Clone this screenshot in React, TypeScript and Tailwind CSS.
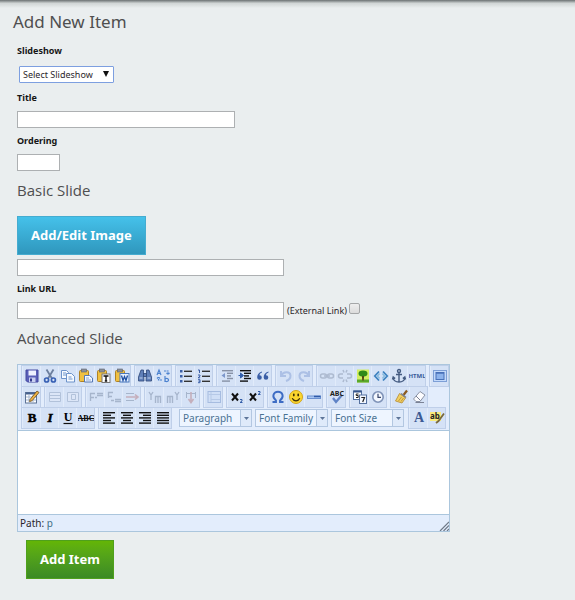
import React from 'react';

type Tool = { name: string; icon: React.ReactNode; off?: boolean };

const lines = (rows: number[][], color = '#111') =>
  rows.map(([x, y, w], i) => <rect key={i} x={x} y={y} width={w} height="1.4" fill={color} />);

const clipboard = (
  <>
    <rect x="1.5" y="2.5" width="9" height="11" rx="1" fill="#f0c041" stroke="#b08325" />
    <rect x="3.5" y="1" width="5" height="3" fill="#8b8f98" stroke="#5d626d" strokeWidth=".6" />
  </>
);

const clock = (
  <>
    <circle cx="8" cy="8" r="5.2" fill="#f4f8ff" stroke="#7f93b8" strokeWidth="1.6" />
    <path d="M8 4.8V8.3H11" fill="none" stroke="#39476b" strokeWidth="1.2" />
  </>
);

const rowOne: Tool[][] = [
  [
    {
      name: 'Save',
      icon: (
        <>
          <path d="M2 2h12v12H3.5L2 12.5z" fill="#5a5fb8" stroke="#4449a0" />
          <rect x="4.5" y="2.5" width="7.5" height="5" fill="#eef1ff" />
          <rect x="5" y="9.5" width="6.5" height="4.5" fill="#c9cff0" />
          <rect x="6" y="10.5" width="2" height="3" fill="#343a8c" />
        </>
      ),
    },
    {
      name: 'Cut',
      icon: (
        <g fill="none">
          <path d="M4.5 1.5L10 10.5M11.5 1.5L6 10.5" stroke="#6d7f9e" strokeWidth="1.8" />
          <circle cx="4.6" cy="12" r="2" stroke="#3a62b5" strokeWidth="1.7" />
          <circle cx="11.4" cy="12" r="2" stroke="#3a62b5" strokeWidth="1.7" />
        </g>
      ),
    },
    {
      name: 'Copy',
      icon: (
        <g fill="#f6faff" stroke="#6d93ca">
          <path d="M1.5 2.5h5l2 2v6h-7z" />
          <path d="M6.5 5.5h5l3 3v5.5h-8z" />
          <path d="M3 5h3M3 7h3M8.5 9h3M8.5 11h4" />
        </g>
      ),
    },
    {
      name: 'Paste',
      icon: (
        <>
          {clipboard}
          <path d="M6.5 7.5h5l3 2.5v4h-8z" fill="#f4f8ff" stroke="#5477b3" />
          <path d="M8 10h3M8 12h5" stroke="#8ba7d6" />
        </>
      ),
    },
    {
      name: 'Paste as Plain Text',
      icon: (
        <>
          {clipboard}
          <rect x="6" y="6" width="8" height="8.5" fill="#fff" stroke="#777" />
          <path d="M7.5 8h5M10 8v5M8.8 13h2.4" stroke="#111" strokeWidth="1.4" />
        </>
      ),
    },
    {
      name: 'Paste from Word',
      icon: (
        <>
          {clipboard}
          <rect x="6" y="5.5" width="9" height="8.5" fill="#e6f0ff" stroke="#4b78bd" />
          <path d="M7.5 7.5l1.5 5 1.5-4 1.5 4 1.5-5" fill="none" stroke="#1e4fa3" strokeWidth="1.3" />
        </>
      ),
    },
  ],
  [
    {
      name: 'Find',
      icon: (
        <g fill="#5f7fb8" stroke="#2f4778" strokeWidth=".8">
          <path d="M4 2h2.5v3L7 13H1.5V9z" />
          <path d="M12 2H9.5v3L9 13h5.5V9z" />
          <rect x="6.5" y="5.5" width="3" height="3" />
          <path d="M2.5 10h3M10.5 10h3" stroke="#dce8fb" />
        </g>
      ),
    },
    {
      name: 'Find/Replace',
      icon: (
        <g fill="none" stroke="#4d83cf" strokeWidth="1.2">
          <path d="M2 7l2-5 2 5M2.8 5.5h2.5" />
          <path d="M10 8v6M10 11.5a1.8 1.6 0 1 1 0 1" />
          <path d="M9 3h4v3M11.5 4.8L13 6.5l1.5-1.7M7 12H3.5V9M2 10.5L3.5 9 5 10.5" strokeDasharray="2 .6" />
        </g>
      ),
    },
  ],
  [
    {
      name: 'Unordered list',
      icon: (
        <>
          <g fill="#3b5fa8">
            <rect x="2" y="2" width="2.5" height="2.5" />
            <rect x="2" y="7" width="2.5" height="2.5" />
            <rect x="2" y="12" width="2.5" height="2.5" />
          </g>
          {lines([[6, 2.6, 8], [6, 7.6, 8], [6, 12.6, 8]], '#333')}
        </>
      ),
    },
    {
      name: 'Ordered list',
      icon: (
        <>
          <path d="M2 2h1.5v3M2 7h2v1.2L2 9.8h2.2M2 11.7h2v3H2M2.5 13.2H4" fill="none" stroke="#3b5fa8" />
          {lines([[6, 2.6, 8], [6, 7.6, 8], [6, 12.6, 8]], '#333')}
        </>
      ),
    },
  ],
  [
    {
      name: 'Outdent',
      icon: (
        <>
          {lines([[3, 2, 11], [8, 4.6, 6], [8, 7.2, 4], [8, 9.8, 6], [3, 12.4, 8]], '#8791a5')}
          <path d="M6 5v5L2.5 7.5z" fill="#7c97cb" />
        </>
      ),
    },
    {
      name: 'Indent',
      icon: (
        <>
          {lines([[3, 2, 11], [7, 4.6, 7], [7, 7.2, 5], [7, 9.8, 7], [3, 12.4, 8]])}
          <path d="M1.5 7.5h3.5M3.5 5v5L6.5 7.5z" fill="#315eac" stroke="#315eac" />
        </>
      ),
    },
    {
      name: 'Block Quote',
      icon: (
        <g fill="#3a5ea6">
          <path d="M7 3.5C3.5 4.5 2 7 2.2 9.5a2.3 2.3 0 1 0 2.3-2.3C4.6 6 5.5 5 7 4.5z" />
          <path d="M13.5 3.5C10 4.5 8.5 7 8.7 9.5A2.3 2.3 0 1 0 11 7.2c.1-1.2 1-2.2 2.5-2.7z" />
        </g>
      ),
    },
  ],
  [
    { name: 'Undo', off: true, icon: <path d="M3 3v5h5M3.5 7.5C5 3.5 12 3 12.5 7.5 12.6 10 11 12 8 13" fill="none" stroke="#6284c7" strokeWidth="2" /> },
    { name: 'Redo', off: true, icon: <path d="M13 3v5H8M12.5 7.5C11 3.5 4 3 3.5 7.5 3.4 10 5 12 8 13" fill="none" stroke="#6284c7" strokeWidth="2" /> },
  ],
  [
    {
      name: 'Insert link',
      off: true,
      icon: (
        <g fill="none" stroke="#66738c" strokeWidth="1.5">
          <rect x="1.5" y="6" width="6" height="4" rx="2" />
          <rect x="8.5" y="6" width="6" height="4" rx="2" />
          <path d="M5 8h6" />
        </g>
      ),
    },
    {
      name: 'Unlink',
      off: true,
      icon: (
        <g fill="none" stroke="#66738c" strokeWidth="1.5">
          <path d="M6 6H3.5a2 2 0 0 0 0 4H6M10 6h2.5a2 2 0 0 1 0 4H10" />
          <path d="M6 2l1 2.5M10 2L9 4.5M6 14l1-2.5M10 14l-1-2.5" />
        </g>
      ),
    },
    {
      name: 'Insert image',
      icon: (
        <>
          <rect x="2" y="1.5" width="12" height="13" fill="#d4ee62" />
          <rect x="2" y="11.5" width="12" height="3" fill="#5aa82a" />
          <path d="M8 2.5c3 0 4.5 1 4.5 3S11 8.5 9 8.5v2H7v-2c-2 0-3.5-1-3.5-3s1.5-3 4.5-3z" fill="#2f8a17" />
          <path d="M7.2 8h1.6v4.5H7.2z" fill="#5a3c12" />
        </>
      ),
    },
    {
      name: 'Cleanup messy code',
      icon: (
        <g fill="none" strokeWidth="1.8">
          <path d="M6 3.5L1.8 8 6 12.5" stroke="#3f83c0" />
          <path d="M10 3.5L14.2 8 10 12.5" stroke="#3f83c0" />
          <path d="M6.5 5.5L4.5 8l2 2.5M9.5 5.5l2 2.5-2 2.5" stroke="#8dbde0" />
        </g>
      ),
    },
    {
      name: 'Insert anchor',
      icon: (
        <g fill="none" stroke="#435a80" strokeWidth="1.4">
          <circle cx="8" cy="3" r="1.5" />
          <path d="M8 4.5V14M5 6.5h6M2 9.5c.5 3 3 4.5 6 4.5s5.5-1.5 6-4.5M1.5 11.5L2.2 9l2 1.5M14.5 11.5L13.8 9l-2 1.5" />
        </g>
      ),
    },
    {
      name: 'Edit HTML source',
      icon: (
        <text x="8" y="10" textAnchor="middle" fontSize="6" fontWeight="bold" fill="#3a5c99">
          HTML
        </text>
      ),
    },
  ],
  [
    {
      name: 'Fullscreen',
      icon: (
        <>
          <rect x="1.5" y="2.5" width="13" height="11" fill="#c4dafa" stroke="#7d9fd6" />
          <rect x="4" y="4.5" width="8" height="7" fill="#8db3ec" stroke="#4871b8" />
          <path d="M4 5h8" stroke="#4871b8" strokeWidth="1.5" />
        </>
      ),
    },
  ],
];

const rowTwo: Tool[][] = [
  [
    {
      name: 'Insert table',
      icon: (
        <>
          <rect x="1.5" y="3.5" width="11" height="10.5" fill="#fff" stroke="#5d7396" />
          <path d="M2 4.5h10.5" stroke="#46618f" strokeWidth="2" />
          <path d="M5 5v9M9 5v9M2 8h10M2 11h10" stroke="#a5b5cf" />
          <path d="M6 10.5L13 2l2 1.5-7 8.3-2.4.8z" fill="#efb447" stroke="#6d4c16" strokeWidth=".8" />
        </>
      ),
    },
  ],
  [
    { name: 'Row properties', off: true, icon: <path d="M2.5 3.5h11v9h-11zM2.5 6.5h11M2.5 9.5h11" fill="#e9f0fa" stroke="#7387a8" /> },
    { name: 'Cell properties', off: true, icon: <path d="M2.5 3.5h11v9h-11zM6.5 5.5h4v5h-4z" fill="#e9f0fa" stroke="#7387a8" /> },
  ],
  [
    { name: 'Insert row before', off: true, icon: <path d="M2 4.5h5M2 8.5h4M2.5 4v8M9 4.5h6M9 6.5h6M7 8.5h2" fill="none" stroke="#50627f" strokeWidth="1.3" /> },
    { name: 'Insert row after', off: true, icon: <path d="M2 3.5h5M2 7.5h4M2.5 3v6M9 10.5h6M9 12.5h6M5 11.5h3" fill="none" stroke="#50627f" strokeWidth="1.3" /> },
    {
      name: 'Delete row',
      off: true,
      icon: (
        <>
          <path d="M2 4.5h8M2 11.5h8" stroke="#50627f" />
          <path d="M2 8h12M11 5.5L14 8l-3 2.5" fill="none" stroke="#a85252" strokeWidth="1.6" />
        </>
      ),
    },
  ],
  [
    { name: 'Insert column before', off: true, icon: <path d="M2 3l2 3 2-3M4 6v5M8.5 14V7.5h5V14M11 8v6" fill="none" stroke="#50627f" strokeWidth="1.3" /> },
    { name: 'Insert column after', off: true, icon: <path d="M10 3l2 3 2-3M12 6v5M2.5 14V7.5h5V14M5 8v6" fill="none" stroke="#50627f" strokeWidth="1.3" /> },
    {
      name: 'Remove column',
      off: true,
      icon: (
        <>
          <path d="M3.5 3v6M12.5 3v6M4 4.5h8" stroke="#50627f" />
          <path d="M8 3v10M5.5 10L8 13.5l2.5-3.5" fill="none" stroke="#a85252" strokeWidth="1.6" />
        </>
      ),
    },
  ],
  [
    {
      name: 'Merge table cells',
      off: true,
      icon: (
        <>
          <rect x="2" y="2.5" width="12.5" height="11" fill="#c9dbf7" stroke="#5078b8" />
          <path d="M2 5.5h12M5 3v10M5 10.5h9" stroke="#7f9dcd" />
        </>
      ),
    },
  ],
  [
    {
      name: 'Subscript',
      icon: (
        <>
          <path d="M3 4.5l6 7M9 4.5l-6 7" stroke="#111" strokeWidth="2" />
          <path d="M11 10.5h2v1.5l-2 1.5h2.5" fill="none" stroke="#335da8" />
        </>
      ),
    },
    {
      name: 'Superscript',
      icon: (
        <>
          <path d="M3 4.5l6 7M9 4.5l-6 7" stroke="#111" strokeWidth="2" />
          <path d="M11 2.5h2V4l-2 1.5h2.5" fill="none" stroke="#335da8" />
        </>
      ),
    },
  ],
  [
    {
      name: 'Insert custom character',
      icon: <path d="M2.5 13H6v-1.5C3.5 9.5 3 7.5 3.5 5.8 4.2 3.5 6 2.7 8 2.7s3.8.8 4.5 3.1c.5 1.7 0 3.7-2.5 5.7V13h3.5" fill="none" stroke="#3d6cc4" strokeWidth="1.9" />,
    },
    {
      name: 'Emotions',
      icon: (
        <>
          <circle cx="8" cy="8" r="6.5" fill="#fbd62c" stroke="#d3a61c" />
          <ellipse cx="5.8" cy="6" rx=".9" ry="1.4" fill="#3b2d06" />
          <ellipse cx="10.2" cy="6" rx=".9" ry="1.4" fill="#3b2d06" />
          <path d="M4.2 9.3c1.5 3.3 6.1 3.3 7.6 0" fill="none" stroke="#3b2d06" strokeWidth="1.2" />
        </>
      ),
    },
    {
      name: 'Insert horizontal ruler',
      icon: (
        <>
          <rect x="1.5" y="7" width="13" height="2.5" fill="#a9c6f2" stroke="#6a90d0" />
          <path d="M8 7.5h6.5" stroke="#2f5aa8" strokeWidth="1.5" />
        </>
      ),
    },
  ],
  [
    {
      name: 'Toggle spellchecker',
      icon: (
        <>
          <path d="M4 9L7 13l6-7" fill="none" stroke="#5f83c6" strokeWidth="2.3" />
          <text x="8" y="7" textAnchor="middle" fontSize="7" fontWeight="bold" fill="#222">
            ABC
          </text>
        </>
      ),
    },
  ],
  [
    {
      name: 'Insert date',
      icon: (
        <>
          <rect x="1.5" y="2" width="8" height="8.5" fill="#fff" stroke="#55719f" />
          <path d="M1.5 2.5h8" stroke="#36568d" strokeWidth="2" />
          <path d="M6.5 5H4.2v1.5h2v2H4" fill="none" stroke="#222" />
          <rect x="7.5" y="6" width="7" height="8.5" fill="#f4f8ff" stroke="#55719f" />
          <path d="M9.3 8.5h3.2L10.7 13" fill="none" stroke="#222" strokeWidth="1.2" />
        </>
      ),
    },
    { name: 'Insert time', icon: clock },
  ],
  [
    {
      name: 'Remove formatting',
      icon: (
        <>
          <path d="M14 1.5L10.5 6" stroke="#8b5a1f" strokeWidth="2.2" />
          <path d="M6.5 4.5l6 4.5-3.5 5L2.5 12z" fill="#f1cf62" stroke="#b48930" strokeWidth=".8" />
          <path d="M8 4.5l5 4" stroke="#7a7f8a" strokeWidth="1.6" />
          <path d="M5.5 12l3-4M8 12.5L10.5 9" stroke="#b48930" strokeWidth=".8" />
        </>
      ),
    },
    {
      name: 'Clean up',
      icon: (
        <>
          <path d="M9 2.5L14 6l-5 6.5H5L2.5 10z" fill="#fdfdff" stroke="#8b93a5" />
          <path d="M5 7l4.5 4.5M4.5 13.5H13" stroke="#7a8295" />
        </>
      ),
    },
  ],
];

const textTools: Tool[][] = [
  [
    {
      name: 'Bold',
      icon: (
        <text x="8" y="12" textAnchor="middle" fontSize="13" fontWeight="bold" stroke="#000" strokeWidth=".5" className="font-['Liberation_Serif',serif]">
          B
        </text>
      ),
    },
    {
      name: 'Italic',
      icon: (
        <text x="8" y="12" textAnchor="middle" fontSize="13" fontWeight="bold" fontStyle="italic" stroke="#000" strokeWidth=".5" className="font-['Liberation_Serif',serif]">
          I
        </text>
      ),
    },
    {
      name: 'Underline',
      icon: (
        <>
          <text x="8" y="11" textAnchor="middle" fontSize="12" fontWeight="bold" className="font-['Liberation_Serif',serif]">
            U
          </text>
          <path d="M3.5 13.5h9" stroke="#111" strokeWidth="1.2" />
        </>
      ),
    },
    {
      name: 'Strikethrough',
      icon: (
        <>
          <text x="8" y="11" textAnchor="middle" fontSize="8" fontWeight="bold" className="font-['Liberation_Serif',serif]">
            ABC
          </text>
          <path d="M0 8.5h16" stroke="#111" />
        </>
      ),
    },
  ],
  [
    { name: 'Align left', icon: lines([[2, 2, 12], [2, 4.6, 8], [2, 7.2, 12], [2, 9.8, 8], [2, 12.4, 12]]) },
    { name: 'Align center', icon: lines([[2, 2, 12], [4, 4.6, 8], [2, 7.2, 12], [4, 9.8, 8], [2, 12.4, 12]]) },
    { name: 'Align right', icon: lines([[2, 2, 12], [6, 4.6, 8], [2, 7.2, 12], [6, 9.8, 8], [2, 12.4, 12]]) },
    { name: 'Align full', icon: lines([[2, 2, 12], [2, 4.6, 12], [2, 7.2, 12], [2, 9.8, 12], [2, 12.4, 12]]) },
  ],
];

const colorTools: Tool[] = [
  {
    name: 'Select text color',
    icon: (
      <text x="8" y="12" textAnchor="middle" fontSize="14" fontWeight="bold" fill="#3c5a94" className="font-['Liberation_Serif',serif]">
        A
      </text>
    ),
  },
  {
    name: 'Select background color',
    icon: (
      <>
        <rect x="1" y="2" width="11" height="9" fill="#f9ec7c" />
        <text x="6" y="9" textAnchor="middle" fontSize="8" fontWeight="bold" fill="#222">
          ab
        </text>
        <path d="M15 3.5L9.5 11l-2.5 2" stroke="#7b6a3c" strokeWidth="1.8" fill="none" />
      </>
    ),
  },
];

const ToolGroup = ({ tools }: { tools: Tool[] }) => (
  <div className="flex h-5 bg-[#d5e2f6] outline outline-[#bfcfe9]">
    {tools.map((tool) => (
      <button
        key={tool.name}
        type="button"
        title={tool.name}
        aria-label={tool.name}
        disabled={tool.off}
        className="flex w-[18px] items-center justify-center border-l border-[#e1ebfa]"
      >
        <svg viewBox="0 0 16 16" className={tool.off ? 'size-4 opacity-35' : 'size-4'}>
          {tool.icon}
        </svg>
      </button>
    ))}
  </div>
);

const ListBox = ({ label }: { label: string }) => (
  <div className="relative h-[18px] w-[73px] border border-[#b3c7e1] bg-[#eef5ff]">
    <select aria-label={label} className="block h-4 w-full appearance-none pl-[3px] text-[10px] leading-4 text-[#4a7293] outline-none">
      <option>{label}</option>
    </select>
    <span className="pointer-events-none absolute inset-y-0 right-0 flex w-[11px] items-center justify-center border-l border-[#b3c7e1] bg-[#dfeafa]">
      <svg viewBox="0 0 5 3" className="h-[3px] w-[5px]">
        <path d="M0 0h5L2.5 3z" fill="#5d7599" />
      </svg>
    </span>
  </div>
);

const inputStyle = 'block h-[17px] max-w-full border border-[#adb0b2] bg-white px-1 text-[10px] outline-none';
const labelStyle = 'block text-[9px] leading-4 font-bold text-[#151515]';
const headingStyle = "font-['Open_Sans',sans-serif] text-[15px] leading-6 text-[#4f4f4f]";

const App = () => {
  return (
    <main className="min-h-screen bg-[#eaeeef] font-['Noto_Sans',sans-serif] text-[10px] text-[#2b1f2b]">
      <div className="h-2 bg-linear-to-b from-[#6c7273] via-[#d0d5d5] via-40% to-[#eaeeef]"></div>

      <form className="pr-4 pb-5 pl-[17px]" onSubmit={(e) => e.preventDefault()}>
        <h1 className="-ml-1 text-[17px] leading-7 text-[#4f4f4f]">Add New Item</h1>

        <label htmlFor="slideshow" className={`${labelStyle} mt-[7px]`}>Slideshow</label>
        <div className="relative mt-[7px] ml-[2px] w-[95px]">
          <select
            id="slideshow"
            className="block h-[17px] w-full appearance-none rounded-[1px] border border-[#7d9fe0] bg-white pl-[3px] text-[9px] leading-[15px] text-[#2b1f2b] outline-none"
          >
            <option>Select Slideshow</option>
          </select>
          <svg viewBox="0 0 6 6" className="pointer-events-none absolute top-[5px] right-[5px] size-[6px]">
            <path d="M0 0h6L3 6z" fill="#111" />
          </svg>
        </div>

        <label htmlFor="title" className={`${labelStyle} mt-[7px]`}>Title</label>
        <input id="title" type="text" className={`${inputStyle} mt-[5px] w-[218px]`} />

        <label htmlFor="ordering" className={`${labelStyle} mt-[5px]`}>Ordering</label>
        <input id="ordering" type="text" className={`${inputStyle} mt-[5px] w-[43px]`} />

        <h2 className={`${headingStyle} mt-[7px]`}>Basic Slide</h2>
        <button
          type="button"
          className="mt-[14px] block h-[39px] border border-[#45acd0] bg-linear-to-b from-[#45c1ea] to-[#2f97bd] px-[13px] text-[13px] font-bold text-white"
        >
          Add/Edit Image
        </button>
        <input type="text" aria-label="Image" className={`${inputStyle} mt-1 w-[267px]`} />

        <label htmlFor="link" className={`${labelStyle} mt-[5px]`}>Link URL</label>
        <div className="mt-[5px] flex items-center">
          <input id="link" type="text" className={`${inputStyle} w-[267px]`} />
          <label htmlFor="external" className="ml-[3px] text-[9px] leading-4">(External Link)</label>
          <input
            id="external"
            type="checkbox"
            className="mb-1 ml-[2px] size-[11px] appearance-none rounded-[2px] border border-[#a5a7a8] bg-linear-to-b from-[#eeeeee] to-[#dcdcdc]"
          />
        </div>

        <h2 className={`${headingStyle} mt-[7px]`}>Advanced Slide</h2>

        {/* Rich text editor */}
        <div className="mt-[14px] max-w-[433px] border border-[#abc6dd] bg-[#e3edfc]">
          <div className="flex flex-col gap-px pt-px pb-[2px] pl-1">
            <div className="flex flex-wrap gap-[5px]">
              {rowOne.map((tools, i) => <ToolGroup key={i} tools={tools} />)}
            </div>
            <div className="flex flex-wrap gap-[5px]">
              {rowTwo.map((tools, i) => <ToolGroup key={i} tools={tools} />)}
            </div>
            <div className="flex flex-wrap items-center gap-[5px]">
              {textTools.map((tools, i) => <ToolGroup key={i} tools={tools} />)}
              <div className="flex gap-[3px] pl-[3px]">
                <ListBox label="Paragraph" />
                <ListBox label="Font Family" />
                <ListBox label="Font Size" />
              </div>
              <ToolGroup tools={colorTools} />
            </div>
          </div>
          <textarea aria-label="Slide content" className="block h-[85px] w-full resize-none border-y border-[#abc6dd] bg-white p-2 outline-none" />
          <div className="flex h-4 items-end justify-between pl-[2px]">
            <p className="leading-4">
              Path: <a href="#path" className="text-[#3f6f86]">p</a>
            </p>
            <svg viewBox="0 0 10 10" className="size-[10px]">
              <path d="M1 10L10 1M4.5 10L10 4.5M8 10l2-2" stroke="#6d7886" strokeWidth="1.2" />
            </svg>
          </div>
        </div>

        <button
          type="submit"
          className="mt-2 ml-[9px] block h-[39px] border border-[#4fa01c] bg-linear-to-b from-[#64b505] to-[#3b8a24] px-[13px] text-[13px] font-bold text-white"
        >
          Add Item
        </button>
      </form>
    </main>
  );
};

export default App;
